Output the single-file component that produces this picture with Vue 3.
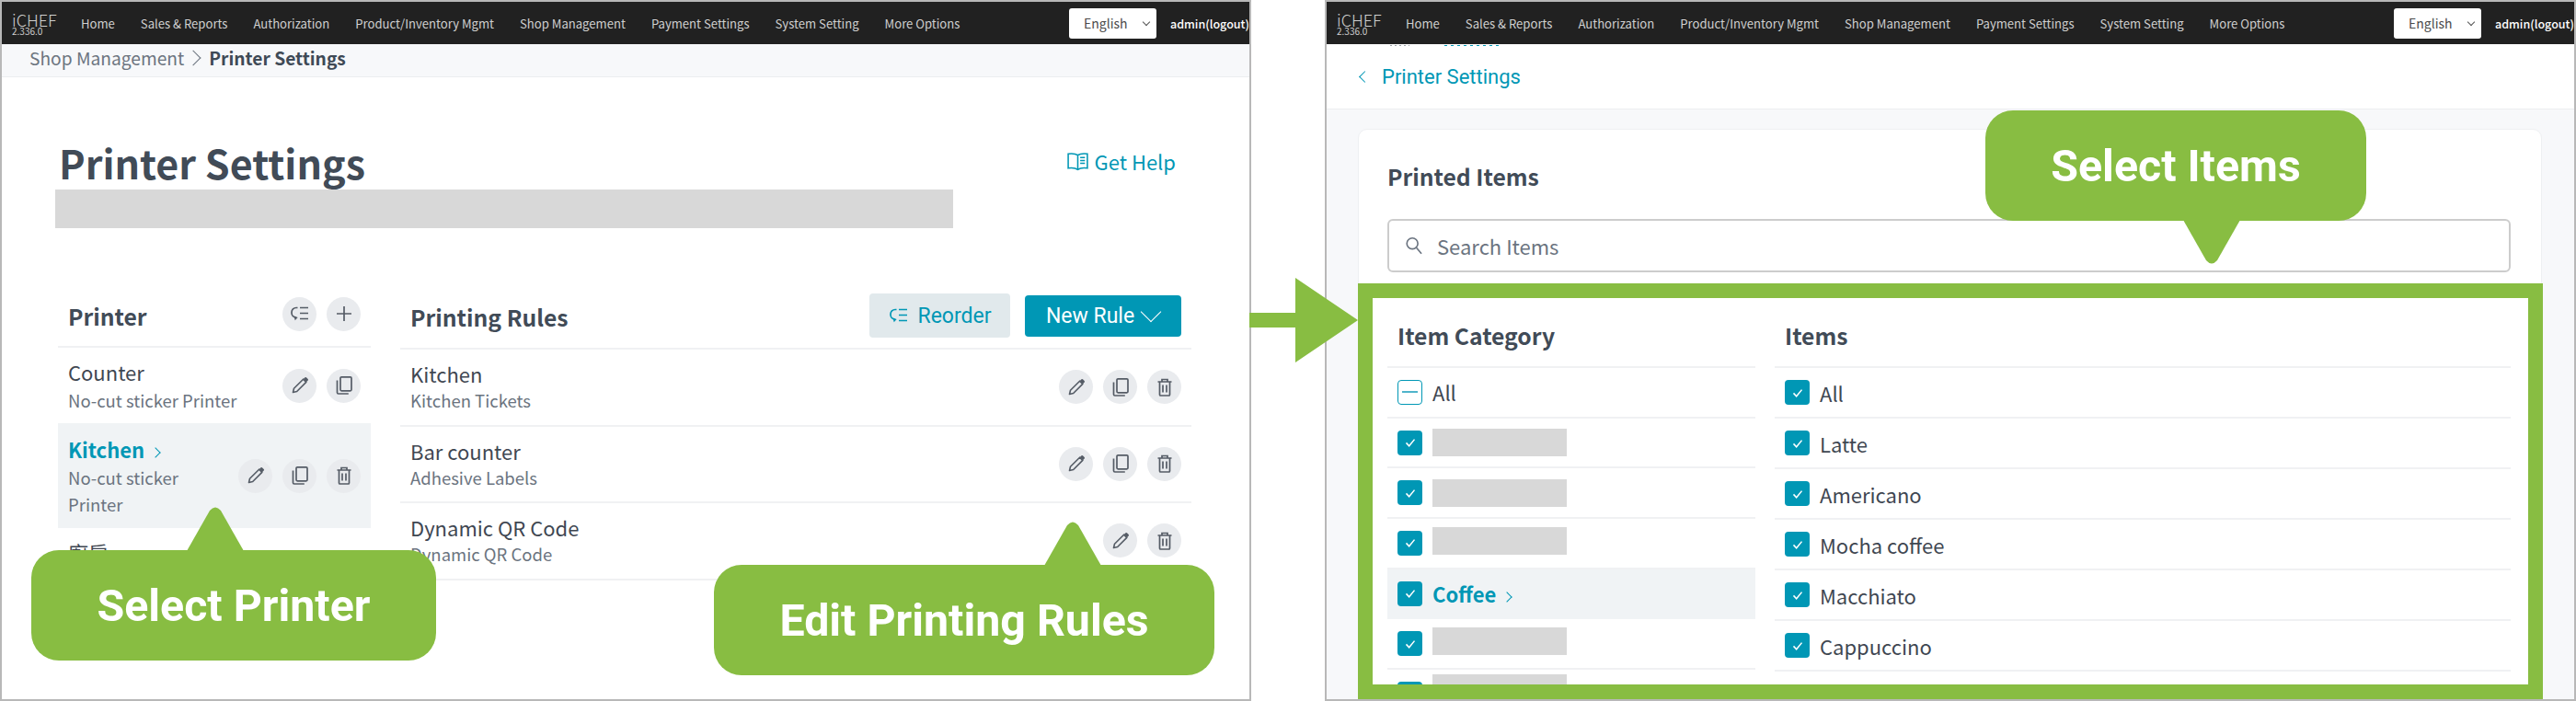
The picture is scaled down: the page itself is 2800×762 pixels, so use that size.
<template>
  <div class="page">
    <svg class="sprites" aria-hidden="true">
      <symbol id="i-pencil" viewBox="0 0 24 24">
        <path d="M4.500 19.500l1-4.200L15.600 5.200l3.200 3.200L8.700 18.500z" fill="none" stroke="currentColor" stroke-width="1.600" stroke-linejoin="round" />
        <path d="M15.800 5l1.700-1.700a1 1 0 0 1 1.400 0l1.800 1.800a1 1 0 0 1 0 1.400L19 8.200z" fill="currentColor" />
      </symbol>
      <symbol id="i-copy" viewBox="0 0 24 24">
        <rect x="8" y="2.800" width="12" height="15" rx="1.200" fill="none" stroke="currentColor" stroke-width="1.700" />
        <path d="M4.500 6.500v13.200a1.300 1.300 0 0 0 1.300 1.300h11" fill="none" stroke="currentColor" stroke-width="1.700" />
      </symbol>
      <symbol id="i-trash" viewBox="0 0 24 24">
        <path d="M4.500 6h15M9 5.500V3.500h6v2M6.500 6v14a1 1 0 0 0 1 1h9a1 1 0 0 0 1-1V6M10 9.500v8M14 9.500v8" fill="none" stroke="currentColor" stroke-width="1.700" />
      </symbol>
      <symbol id="i-reorder" viewBox="0 0 24 24">
        <path d="M9.500 5.500H8a5 5 0 0 0-5 5v.5a5 5 0 0 0 4.500 5" fill="none" stroke="currentColor" stroke-width="1.700" />
        <path d="M5.500 14.500l4.200 1.400-3 3.400z" fill="currentColor" />
        <path d="M12 5.500h9M12 11.500h9M12 17.500h9" fill="none" stroke="currentColor" stroke-width="1.700" />
      </symbol>
      <symbol id="i-plus" viewBox="0 0 24 24">
        <path d="M12 4v16M4 12h16" fill="none" stroke="currentColor" stroke-width="1.700" />
      </symbol>
      <symbol id="i-book" viewBox="0 0 24 24">
        <path d="M12 5.500C10 4 6 3.500 2 4v15c4-.5 8 0 10 1.500 2-1.500 6-2 10-1.500V4c-4-.5-8 0-10 1.500zM12 5.500v15M14.500 8h5M14.500 11h5M14.500 14h5" fill="none" stroke="currentColor" stroke-width="1.500" />
      </symbol>
      <symbol id="i-search" viewBox="0 0 24 24">
        <circle cx="10" cy="9.500" r="6.500" fill="none" stroke="currentColor" stroke-width="1.800" />
        <path d="M14.800 14.500l6 7" fill="none" stroke="currentColor" stroke-width="1.800" />
      </symbol>
      <symbol id="i-check" viewBox="0 0 24 24">
        <path d="M6 12.500l4.200 4.500L18 7.500" fill="none" stroke="currentColor" stroke-width="2" />
      </symbol>
    </svg>

    <section class="panel">
      <header class="topbar">
        <div class="brand"><span class="brand-name">iCHEF</span><span class="brand-ver">2.336.0</span></div>
        <nav class="menu"><a v-for="m in menu" :key="m">{{ m }}</a></nav>
        <div class="lang">English<span class="lang-caret"></span></div>
        <span class="admin">admin(logout)</span>
      </header>
      <div class="crumbs">
        <span>Shop Management</span>
        <span class="chev chev-crumb"></span>
        <b>Printer Settings</b>
      </div>
      <div class="settings">
        <div class="title-row">
          <h1>Printer Settings</h1>
          <a class="help"><svg class="help-icon"><use href="#i-book" /></svg>Get Help</a>
        </div>
        <div class="redacted redacted-wide"></div>
        <div class="columns">
          <div class="printers">
            <div class="col-head printers-head">
              <h2>Printer</h2>
              <div class="actions">
                <span class="round"><svg><use href="#i-reorder" /></svg></span>
                <span class="round"><svg><use href="#i-plus" /></svg></span>
              </div>
            </div>
            <div v-for="p in printers" :key="p.name" class="printer" :class="{ active: p.active }">
              <div class="printer-text">
                <div class="name">{{ p.name }}<span v-if="p.active" class="chev chev-row"></span></div>
                <div class="sub">{{ p.sub }}</div>
              </div>
              <div class="actions">
                <span v-for="ic in p.icons" :key="ic" class="round"><svg><use :href="'#i-' + ic" /></svg></span>
              </div>
            </div>
          </div>
          <div class="rules">
            <div class="col-head rules-head">
              <h2>Printing Rules</h2>
              <div class="btns">
                <button class="btn btn-soft"><svg><use href="#i-reorder" /></svg>Reorder</button>
                <button class="btn btn-main">New Rule<span class="chev chev-down"></span></button>
              </div>
            </div>
            <div v-for="r in rules" :key="r.name" class="rule">
              <div>
                <div class="name">{{ r.name }}</div>
                <div class="sub">{{ r.sub }}</div>
              </div>
              <div class="actions">
                <span v-for="ic in r.icons" :key="ic" class="round"><svg><use :href="'#i-' + ic" /></svg></span>
              </div>
            </div>
          </div>
        </div>
      </div>
    </section>

    <section class="panel">
      <header class="topbar">
        <div class="brand"><span class="brand-name">iCHEF</span><span class="brand-ver">2.336.0</span></div>
        <nav class="menu"><a v-for="m in menu" :key="m">{{ m }}</a></nav>
        <div class="lang">English<span class="lang-caret"></span></div>
        <span class="admin">admin(logout)</span>
      </header>
      <div class="back-bar">
        <div class="cut-text"><i></i><i class="teal"></i></div>
        <a class="back"><span class="chev chev-back"></span>Printer Settings</a>
      </div>
      <div class="editor">
        <div class="card">
          <h2 class="card-title">Printed Items</h2>
          <div class="search"><svg><use href="#i-search" /></svg><span>Search Items</span></div>
          <div class="pick">
            <div>
              <h2 class="pick-head">Item Category</h2>
              <div v-for="(c, i) in categories" :key="i" class="pick-row cat-row" :class="{ active: c.active }">
                <span class="box" :class="{ partial: c.partial }">
                  <i v-if="c.partial"></i>
                  <svg v-else><use href="#i-check" /></svg>
                </span>
                <span v-if="c.label" class="label">{{ c.label }}<span v-if="c.active" class="chev chev-row"></span></span>
                <span v-else class="redacted redacted-cat" :style="{ transform: 'translateY(' + c.shift + 'px)' }"></span>
              </div>
            </div>
            <div>
              <h2 class="pick-head">Items</h2>
              <div v-for="it in items" :key="it" class="pick-row">
                <span class="box"><svg><use href="#i-check" /></svg></span>
                <span class="label">{{ it }}</span>
              </div>
            </div>
          </div>
        </div>
      </div>
    </section>

    <div class="frame"></div>
    <svg class="arrow" viewBox="0 0 118 92"><polygon points="0,38 50,38 50,0 118,46 50,92 50,54 0,54" /></svg>

    <div class="bubble b-printer">
      <svg class="tip" viewBox="0 0 62 48"><path d="M0 48L25 4Q31-3 37 4L62 48z" /></svg>
      Select Printer
    </div>
    <div class="bubble b-rules">
      <svg class="tip" viewBox="0 0 62 48"><path d="M0 48L25 4Q31-3 37 4L62 48z" /></svg>
      Edit Printing Rules
    </div>
    <div class="bubble b-items">
      <svg class="tip tip-down" viewBox="0 0 62 48"><path d="M0 48L25 4Q31-3 37 4L62 48z" /></svg>
      Select Items
    </div>
  </div>
</template>

<script setup>
const menu = [
  'Home',
  'Sales & Reports',
  'Authorization',
  'Product/Inventory Mgmt',
  'Shop Management',
  'Payment Settings',
  'System Setting',
  'More Options'
]

const printers = [
  { name: 'Counter', sub: 'No-cut sticker Printer', icons: ['pencil', 'copy'] },
  { name: 'Kitchen', sub: 'No-cut sticker Printer', icons: ['pencil', 'copy', 'trash'], active: true },
  { name: '廚房', sub: '\u00a0', icons: [] }
]

const rules = [
  { name: 'Kitchen', sub: 'Kitchen Tickets', icons: ['pencil', 'copy', 'trash'] },
  { name: 'Bar counter', sub: 'Adhesive Labels', icons: ['pencil', 'copy', 'trash'] },
  { name: 'Dynamic QR Code', sub: 'Dynamic QR Code', icons: ['pencil', 'trash'] }
]

const categories = [
  { label: 'All', partial: true },
  { shift: 0 },
  { shift: 0 },
  { shift: -2 },
  { label: 'Coffee', active: true },
  { shift: -3 },
  { shift: -6 }
]

const items = ['All', 'Latte', 'Americano', 'Mocha coffee', 'Macchiato', 'Cappuccino']
</script>

<style>
html,
body {
  margin: 0;
  overflow: hidden;
  background: #fff;
}
</style>

<style scoped>
.page {
  position: relative;
  width: 2800px;
  height: 762px;
  display: flex;
  justify-content: space-between;
  overflow: hidden;
  font-family: "Noto Sans CJK TC", "Noto Sans", sans-serif;
  color: #3f4752;
}

.sprites {
  position: absolute;
  width: 0;
  height: 0;
}

.panel {
  width: 1360px;
  height: 762px;
  box-sizing: border-box;
  border: 2px solid #b8b8b8;
  display: flex;
  flex-direction: column;
  overflow: hidden;
  background: #fff;
}

.topbar {
  flex: none;
  height: 46px;
  background: #212121;
  display: flex;
  align-items: center;
  padding-left: 11px;
  color: #cfcfcf;
  white-space: nowrap;
}

.brand {
  flex: none;
  width: 75px;
  display: flex;
  flex-direction: column;
  line-height: 1;
  margin-top: 1px;
}

.brand-name {
  font-size: 18px;
  font-weight: 300;
  height: 17px;
}

.brand-ver {
  font-size: 10px;
  line-height: 10px;
}

.menu {
  flex: none;
  display: flex;
  gap: 28px;
  font-size: 13.100px;
  width: 1074px;
}

.lang {
  flex: none;
  width: 95px;
  height: 33px;
  box-sizing: border-box;
  background: #fff;
  border-radius: 3px;
  color: #4b4b4b;
  font-size: 14px;
  line-height: 33px;
  padding-left: 16px;
  position: relative;
}

.lang-caret {
  position: absolute;
  right: 8px;
  top: 12px;
  width: 5px;
  height: 5px;
  border-right: 1px solid #555;
  border-bottom: 1px solid #555;
  transform: rotate(45deg);
}

.admin {
  flex: none;
  margin-left: 15px;
  color: #fff;
  font-size: 12.500px;
  font-weight: 500;
}

.crumbs {
  flex: none;
  height: 36px;
  box-sizing: border-box;
  background: #f7f8fa;
  border-bottom: 1px solid #eceef0;
  padding: 0 0 6px 30px;
  display: flex;
  align-items: center;
  font-size: 19.200px;
  color: #6d7580;
}

.crumbs b {
  color: #3f4a56;
  font-weight: 700;
}

.chev {
  display: inline-block;
  width: 9px;
  height: 9px;
  border-right: 1.500px solid currentColor;
  border-top: 1.500px solid currentColor;
  transform: rotate(45deg);
}

.chev-crumb {
  margin: 0 11px 0 4px;
  border-width: 1px;
  width: 11px;
  height: 11px;
}

.chev-row {
  margin-left: 8px;
  width: 7px;
  height: 7px;
  vertical-align: 2px;
}

.chev-down {
  width: 15px;
  height: 15px;
  border-width: 1.500px;
  transform: rotate(135deg);
  margin: -9px 2px 0 10px;
}

.chev-back {
  width: 8px;
  height: 8px;
  transform: rotate(-135deg);
  margin-right: 14px;
}

.settings {
  padding-left: 61px;
  flex: 1;
}

.title-row {
  padding: 62px 80px 0 1px;
  display: flex;
  justify-content: space-between;
  align-items: center;
}

h1 {
  margin: 0;
  font-size: 43px;
  line-height: 60px;
  font-weight: 700;
  color: #414b57;
}

.help {
  display: flex;
  align-items: center;
  color: #0097b5;
  font-size: 22px;
  margin-top: -2px;
}

.help-icon {
  width: 25px;
  height: 25px;
  margin-right: 6px;
}

.redacted {
  display: block;
  background: #d8d8d8;
}

.redacted-wide {
  width: 976px;
  height: 42px;
  margin-left: -3px;
}

.columns {
  display: flex;
  gap: 32px;
  margin-top: 64px;
}

.printers {
  width: 340px;
}

.rules {
  width: 860px;
}

.col-head {
  display: flex;
  align-items: center;
  justify-content: space-between;
  box-sizing: border-box;
  border-bottom: 2px solid #f0f1f3;
}

h2 {
  margin: 0;
  font-size: 24.700px;
  font-weight: 700;
  color: #414b57;
}

.printers-head {
  height: 66px;
  padding: 0 11px 6px;
}

.printers-head h2 {
  margin-top: 3px;
}

.rules-head {
  height: 68px;
  padding: 0 11px 4px;
}

.rules-head h2 {
  margin-top: 2px;
}

.actions {
  display: flex;
  gap: 11px;
}

.round {
  width: 37px;
  height: 37px;
  border-radius: 50%;
  background: #e9ebee;
  color: #555c66;
  display: flex;
  align-items: center;
  justify-content: center;
}

.round svg {
  width: 24px;
  height: 24px;
}

.btns {
  display: flex;
  gap: 16px;
  align-items: center;
}

.btn {
  border: 0;
  border-radius: 4px;
  font-family: Roboto, sans-serif;
  font-size: 23px;
  display: flex;
  align-items: center;
  justify-content: center;
}

.btn-soft {
  width: 153px;
  height: 48px;
  background: #e1e9ec;
  color: #0097b5;
}

.btn-soft svg {
  width: 24px;
  height: 24px;
  margin-right: 8px;
}

.btn-main {
  width: 170px;
  height: 45px;
  background: #0097b5;
  color: #fff;
}

.name {
  font-size: 22px;
  line-height: 30px;
}

.sub {
  font-size: 18.500px;
  line-height: 29px;
  color: #6b7480;
}

.printer {
  box-sizing: border-box;
  min-height: 81px;
  padding: 10px 11px;
  display: flex;
  align-items: center;
  justify-content: space-between;
}

.printer-text {
  padding-top: 1px;
}

.printer-text .sub {
  margin-top: 2px;
}

.printer.active {
  background: #f0f3f5;
  min-height: 114px;
}

.printer.active .printer-text {
  max-width: 170px;
}

.printer.active .name {
  color: #0097b5;
  font-weight: 700;
}

.rule {
  box-sizing: border-box;
  height: 83.500px;
  border-bottom: 2px solid #f0f1f3;
  padding: 0 11px;
  display: flex;
  align-items: center;
  justify-content: space-between;
}

.back-bar {
  flex: none;
  position: relative;
  height: 71px;
  box-sizing: border-box;
  border-bottom: 1px solid #eceef0;
  padding-left: 37px;
  display: flex;
  align-items: center;
}

.cut-text {
  position: absolute;
  left: 69px;
  top: 1px;
  display: flex;
  gap: 38px;
}

.cut-text i {
  width: 21px;
  height: 1px;
  background: repeating-linear-gradient(90deg, #9aa0a6 0 2px, transparent 2px 5px);
}

.cut-text i.teal {
  width: 60px;
  background: repeating-linear-gradient(90deg, #0097b5 0 3px, transparent 3px 7px);
}

.back {
  font-family: Roboto, sans-serif;
  color: #0097b5;
  font-size: 22px;
  display: flex;
  align-items: center;
}

.editor {
  flex: 1;
  min-height: 0;
  background: #f7f8fa;
  padding: 21px 35px 0 34px;
}

.card {
  box-sizing: border-box;
  height: 640px;
  background: #fff;
  border: 1px solid #eef0f2;
  border-radius: 10px 10px 0 0;
  padding: 30px 33px 0 31px;
}

.card-title {
  line-height: 40px;
}

.search {
  box-sizing: border-box;
  height: 58px;
  margin-top: 27px;
  border: 2px solid #cccccc;
  border-radius: 6px;
  display: flex;
  align-items: center;
  padding-left: 16px;
  font-size: 22px;
  color: #6b7480;
}

.search svg {
  width: 22px;
  height: 22px;
  margin-right: 14px;
}

.pick {
  display: grid;
  grid-template-columns: 400px 800px;
  gap: 21px;
}

.pick-head {
  box-sizing: border-box;
  height: 104px;
  border-bottom: 2px solid #f0f1f3;
  padding: 46px 0 0 11px;
  line-height: 44px;
}

.pick-row {
  box-sizing: border-box;
  height: 55px;
  padding-left: 11px;
  border-bottom: 2px solid #f0f1f3;
  display: flex;
  align-items: center;
  font-size: 22px;
}

.cat-row {
  height: 54.700px;
}

.cat-row.active {
  background: #f0f3f5;
  border-bottom-color: #f0f3f5;
}

.cat-row.active .label {
  color: #0097b5;
  font-weight: 700;
}

.box {
  flex: none;
  width: 27px;
  height: 27px;
  box-sizing: border-box;
  border-radius: 4px;
  background: #0097b5;
  color: #fff;
  margin-right: 11px;
  display: flex;
  align-items: center;
  justify-content: center;
}

.box svg {
  width: 18px;
  height: 18px;
}

.box.partial {
  background: #fff;
  border: 1px solid #0097b5;
}

.box.partial i {
  width: 17px;
  height: 2px;
  background: #4fb4cb;
}

.redacted-cat {
  width: 146px;
  height: 30px;
}

.frame {
  position: absolute;
  left: 1476px;
  top: 308px;
  width: 1288px;
  height: 452px;
  box-sizing: border-box;
  border: 16px solid #88bd42;
}

.arrow {
  position: absolute;
  left: 1358px;
  top: 302px;
  width: 118px;
  height: 92px;
  fill: #88bd42;
}

.bubble {
  position: absolute;
  height: 120px;
  background: #88bd42;
  border-radius: 30px;
  color: #fff;
  font-family: Roboto, sans-serif;
  font-weight: 700;
  font-size: 48.300px;
  display: flex;
  align-items: center;
  justify-content: center;
}

.tip {
  position: absolute;
  top: -47px;
  width: 62px;
  height: 48px;
  fill: #88bd42;
}

.tip-down {
  top: auto;
  bottom: -47px;
  transform: scaleY(-1);
}

.b-printer {
  left: 34px;
  top: 598px;
  width: 440px;
}

.b-printer .tip {
  left: 169px;
}

.b-rules {
  left: 776px;
  top: 614px;
  width: 544px;
}

.b-rules .tip {
  left: 359px;
}

.b-items {
  left: 2158px;
  top: 120px;
  width: 414px;
}

.b-items .tip {
  left: 215px;
}
</style>
